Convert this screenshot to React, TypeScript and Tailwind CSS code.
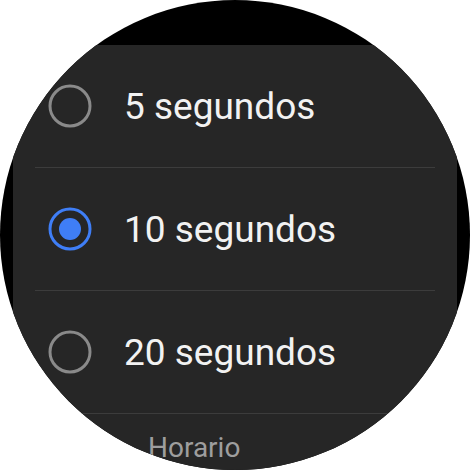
const options = [
  { label: "5 segundos", selected: false },
  { label: "10 segundos", selected: true },
  { label: "20 segundos", selected: false },
];

const Radio = ({ selected }: { selected: boolean }) => (
  <svg width="44" height="44" viewBox="0 0 44 44" className="shrink-0">
    <circle
      cx="22"
      cy="22"
      r="20"
      fill="none"
      stroke={selected ? "#3f7ef6" : "#8a8a8a"}
      strokeWidth="3"
    />
    {selected && <circle cx="22" cy="22" r="11" fill="#3f7ef6" />}
  </svg>
);

const App = () => {
  return (
    <div className="w-[470px] h-[470px] bg-white">
      <div className="w-[470px] h-[470px] rounded-full bg-black overflow-hidden pt-[45px] px-[13px]">
        <div
          className="h-full bg-[#262626] flex flex-col"
          style={{ fontFamily: "Roboto, 'Noto Sans', sans-serif" }}
        >
          {options.map((opt) => (
            <div key={opt.label} className="px-[22px]">
              <div className="h-[123px] border-b border-[#3c3c3c] flex items-center pl-[13px] gap-[32px]">
                <Radio selected={opt.selected} />
                <span className="text-[37px] leading-none text-[#f2f2f2]">{opt.label}</span>
              </div>
            </div>
          ))}
          <div className="pt-[20px] pl-[135px] text-[28px] leading-none text-[#9e9e9e]">
            Horario
          </div>
        </div>
      </div>
    </div>
  );
};

export default App;
